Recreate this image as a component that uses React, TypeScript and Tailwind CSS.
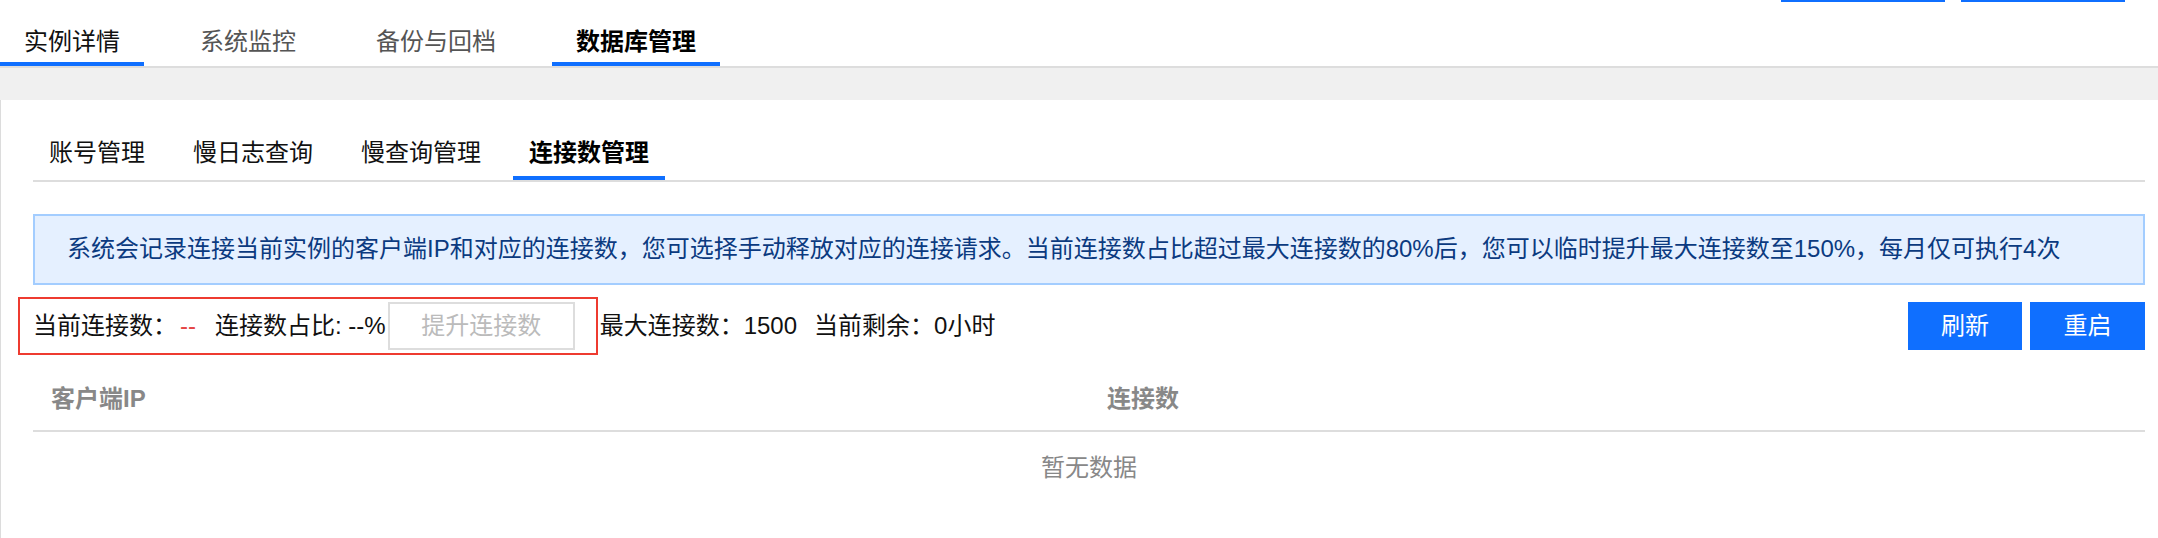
const topTabs = [
  { label: '实例详情', active: false, underline: true, dark: true },
  { label: '系统监控', active: false, underline: false, dark: false },
  { label: '备份与回档', active: false, underline: false, dark: false },
  { label: '数据库管理', active: true, underline: true, dark: true },
];

const subTabs = ['账号管理', '慢日志查询', '慢查询管理', '连接数管理'];

export default function App() {
  return (
    <div className="w-[2158px] h-[538px] overflow-hidden bg-white font-['Liberation_Sans','Noto_Sans_CJK_SC',sans-serif] text-[24px]">
      {/* top bar */}
      <div className="flex flex-col h-[68px] border-b-2 border-[#dddddd]">
        <div className="flex justify-end gap-4 pr-[33px] h-[2px]">
          <div className="w-[164px] h-[2px] bg-[#0f6fff]" />
          <div className="w-[164px] h-[2px] bg-[#0f6fff]" />
        </div>
        <div className="flex items-end gap-8 flex-1">
          {topTabs.map((t) => (
            <div
              key={t.label}
              className={`px-6 pb-1 leading-[32px] border-b-4 ${
                t.underline ? 'border-[#0f6fff]' : 'border-transparent'
              } ${t.active ? 'font-bold text-black' : t.dark ? 'text-[#111]' : 'text-[#555]'}`}
            >
              {t.label}
            </div>
          ))}
        </div>
      </div>
      <div className="h-[32px] bg-[#f0f0f0]" />

      {/* panel */}
      <div className="border-l border-[#dcdcdc] pl-[32px] pr-[13px] pt-[32px] h-full">
        <div className="flex gap-4 border-b-2 border-[#dddddd]">
          {subTabs.map((label, i) => {
            const active = i === subTabs.length - 1;
            return (
              <div
                key={label}
                className={`px-4 pt-[5px] pb-[7px] leading-[32px] border-b-4 ${
                  active ? 'border-[#0f6fff] font-bold text-black' : 'border-transparent text-[#111]'
                }`}
              >
                {label}
              </div>
            );
          })}
        </div>

        <div className="mt-[32px] border-2 border-[#a3cdff] bg-[#e5f0ff] pl-[32px] pt-[17px] pb-[18px] leading-[32px] text-[#0b3a80]">
          系统会记录连接当前实例的客户端IP和对应的连接数，您可选择手动释放对应的连接请求。当前连接数占比超过最大连接数的80%后，您可以临时提升最大连接数至150%，每月仅可执行4次
        </div>

        <div className="relative mt-[17px] flex items-center justify-between h-[48px] text-[#111]">
          <div className="flex items-center leading-[32px]">
            <span>当前连接数：</span>
            <span className="text-[#e54545] ml-[3px] mr-[19px]">--</span>
            <span>连接数占比: --%</span>
            <button className="ml-[2px] w-[187px] h-[48px] border-2 border-[#dddddd] text-[#bbbbbb] bg-white">
              提升连接数
            </button>
            <span className="ml-[25px]">最大连接数：1500</span>
            <span className="ml-[17px]">当前剩余：0小时</span>
          </div>
          <div className="flex gap-2">
            <button className="w-[114px] h-[48px] bg-[#0f6fff] text-white">刷新</button>
            <button className="w-[115px] h-[48px] bg-[#0f6fff] text-white">重启</button>
          </div>
          {/* annotation box */}
          <div className="absolute left-[-15px] top-[-5px] w-[580px] h-[58px] border-2 border-[#ee3b30] pointer-events-none" />
        </div>

        <div className="mt-[18px]">
          <div className="grid grid-cols-2 h-[64px] items-center border-b-2 border-[#dddddd] font-bold text-[#888]">
            <div className="px-[18px]">客户端IP</div>
            <div className="px-[18px]">连接数</div>
          </div>
          <div className="h-[72px] flex items-center justify-center text-[#888]">暂无数据</div>
        </div>
      </div>
    </div>
  );
}
